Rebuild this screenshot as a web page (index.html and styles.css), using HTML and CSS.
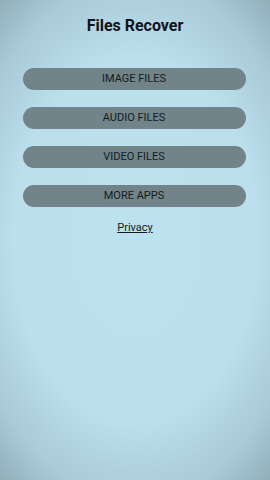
FILE: index.html
```html
<!DOCTYPE html>
<html>
<head>
<meta charset="utf-8">
<link rel="stylesheet" href="styles.css">
</head>
<body>
<div class="screen">
  <h1 class="title">Files Recover</h1>
  <div class="menu">
    <button class="btn">IMAGE FILES</button>
    <button class="btn">AUDIO FILES</button>
    <button class="btn">VIDEO FILES</button>
    <button class="btn">MORE APPS</button>
  </div>
  <a class="privacy" href="#">Privacy</a>
</div>
</body>
</html>
```
FILE: styles.css
```css
html, body {
  margin: 0;
  padding: 0;
}
body {
  width: 270px;
  height: 480px;
  overflow: hidden;
  font-family: Roboto, "Liberation Sans", sans-serif;
}
.screen {
  width: 270px;
  height: 480px;
  box-sizing: border-box;
  display: flex;
  flex-direction: column;
  align-items: center;
  background:
    radial-gradient(ellipse 78% 66% at 50% 50%, #bce1ef 0%, #bbdfed 58%, #a9cad7 82%, #8fadb9 100%);
}
.title {
  margin: 16px 0 0 0;
  font-size: 16px;
  line-height: 20px;
  font-weight: 700;
  color: #101418;
}
.menu {
  margin-top: 32px;
  display: flex;
  flex-direction: column;
  gap: 17px;
}
.btn {
  width: 223px;
  height: 22px;
  margin-left: -2px;
  border: none;
  border-radius: 11px;
  background: #718489;
  color: #141c20;
  font-family: Roboto, "Liberation Sans", sans-serif;
  font-size: 11px;
  padding: 0;
  line-height: 22px;
}
.privacy {
  margin-top: 14px;
  font-size: 11px;
  line-height: 14px;
  color: #141c20;
  text-decoration: underline;
}
```
